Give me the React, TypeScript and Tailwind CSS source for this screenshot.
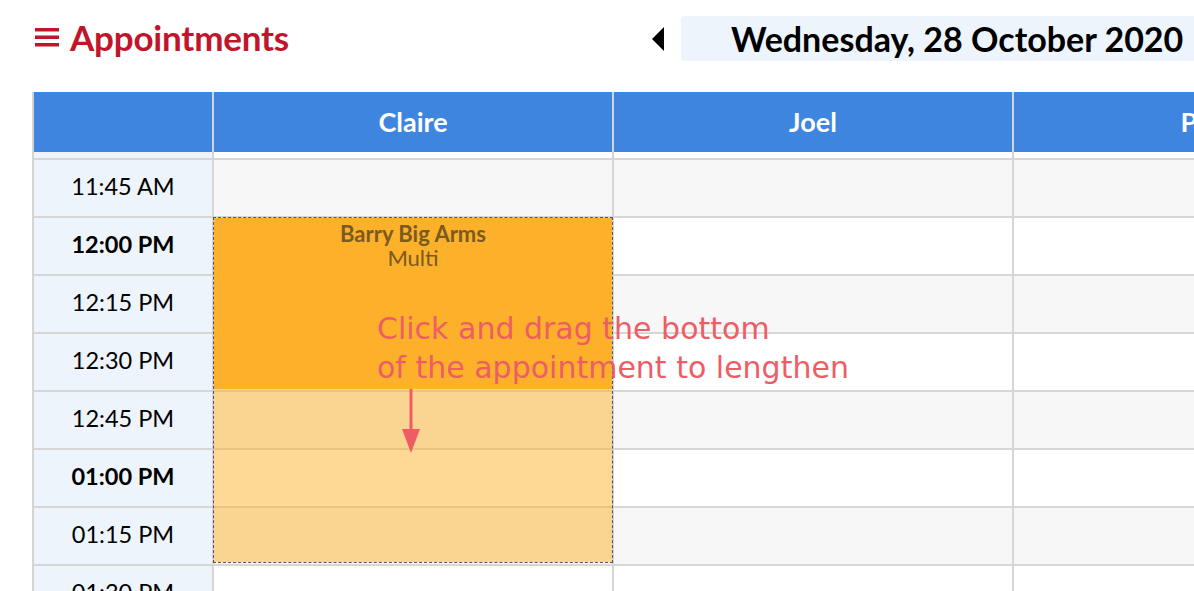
import React from "react";

const times = [
  { label: "11:45 AM", hour: false },
  { label: "12:00 PM", hour: true },
  { label: "12:15 PM", hour: false },
  { label: "12:30 PM", hour: false },
  { label: "12:45 PM", hour: false },
  { label: "01:00 PM", hour: true },
  { label: "01:15 PM", hour: false },
  { label: "01:30 PM", hour: false },
];

const staff = ["Claire", "Joel", "Peter"];

export default function App() {
  return (
    <div className="w-[1194px] h-[591px] overflow-hidden bg-white font-['Lato',sans-serif] text-black">
      {/* top bar */}
      <div className="flex h-[92px] pt-[16px]">
        <div className="w-[652px] shrink-0 pl-[35px] flex items-start">
          <div className="flex items-center gap-[11px] h-[42px] text-[#c0152b]">
            <svg width="24" height="19" viewBox="0 0 24 19" className="shrink-0">
              <rect x="0" y="0" width="24" height="3.5" fill="currentColor" />
              <rect x="0" y="7.5" width="24" height="3.5" fill="currentColor" />
              <rect x="0" y="15" width="24" height="3.5" fill="currentColor" />
            </svg>
            <h1 className="text-[35px] font-bold leading-none tracking-[-0.2px]">Appointments</h1>
          </div>
        </div>
        <div className="flex items-start shrink-0">
          <button className="h-[45px] w-[29px] flex items-center">
            <svg width="12" height="24" viewBox="0 0 12 24">
              <polygon points="12,0 12,24 0,12" fill="#000" />
            </svg>
          </button>
          <div className="h-[45px] w-[549px] rounded-[4px] bg-[#edf4fb] flex items-center pl-[50px]">
            <span className="text-[34px] font-bold leading-none text-black">Wednesday, 28 October 2020</span>
          </div>
        </div>
      </div>

      {/* calendar grid */}
      <div className="relative ml-[32px] w-[1400px]">
        <div className="grid grid-cols-[180px_400px_400px_400px] h-[60px] bg-[#3e85e0]">
          <div className="border-l-2 border-[#d4d4d4]" />
          {staff.map((s) => (
            <div
              key={s}
              className="border-l-2 border-[#d4d4d4] flex items-center justify-center text-white font-bold text-[27px]"
            >
              {s}
            </div>
          ))}
        </div>
        <div className="grid grid-cols-[180px_400px_400px_400px] h-[6px]">
          <div className="border-l-2 border-[#d4d4d4] bg-[#edf4fb]" />
          <div className="border-l-2 border-[#d4d4d4] bg-white" />
          <div className="border-l-2 border-[#d4d4d4] bg-white" />
          <div className="border-l-2 border-[#d4d4d4] bg-white" />
        </div>
        {times.map((t, i) => (
          <div key={t.label} className="grid grid-cols-[180px_400px_400px_400px] h-[58px] border-t-2 border-[#d6d6d6]">
            <div
              className={`border-l-2 border-[#d4d4d4] bg-[#edf4fb] flex items-center justify-center text-[23.5px] pb-[2px] ${
                t.hour ? "font-bold" : "font-normal"
              }`}
            >
              {t.label}
            </div>
            {staff.map((s) => (
              <div
                key={s}
                className={`border-l-2 border-[#d6d6d6] ${i % 2 === 0 ? "bg-[#f7f7f7]" : "bg-white"}`}
              />
            ))}
          </div>
        ))}

        {/* appointment being resized */}
        <div className="absolute left-[181px] top-[125px] w-[400px] h-[346px] border border-dashed border-[#555] flex flex-col">
          <div className="h-[171px] bg-[#fdb12b] flex flex-col items-center pt-[4px] text-[#7a5a1e] text-[22px] leading-[24px]">
            <span className="font-bold">Barry Big Arms</span>
            <span>Multi</span>
          </div>
          <div className="flex-1 bg-[#fdb12b]/50" />
        </div>

        {/* hint */}
        <div className="absolute left-[345px] top-[217px] text-[30px] leading-[39px] text-[#ee5d66] font-['DejaVu_Sans',sans-serif] whitespace-nowrap">
          <div>Click and drag the bottom</div>
          <div>of the appointment to lengthen</div>
        </div>
        <svg className="absolute left-[370px] top-[297px]" width="18" height="64" viewBox="0 0 18 64">
          <rect x="7.5" y="0" width="3" height="42" fill="#ee5d66" />
          <polygon points="0,40 18,40 9,64" fill="#ee5d66" />
        </svg>
      </div>
    </div>
  );
}
